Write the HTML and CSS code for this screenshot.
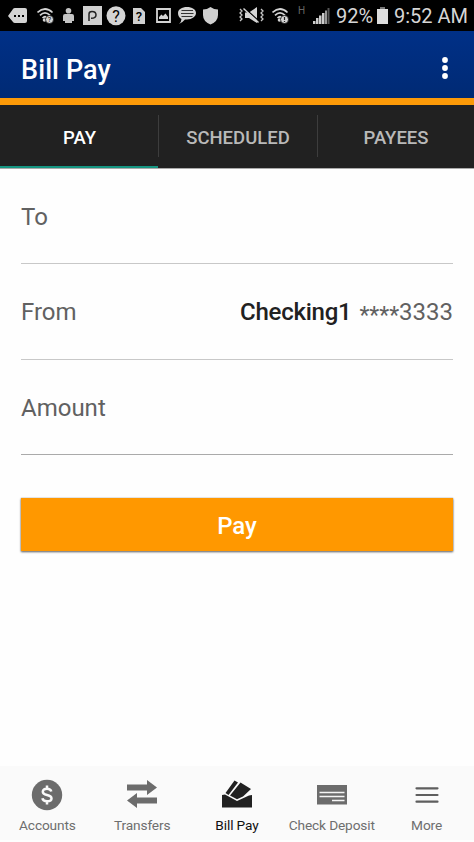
FILE: index.html
```html
<!DOCTYPE html>
<html lang="en">
<head>
<meta charset="utf-8">
<title>Bill Pay</title>
<link rel="stylesheet" href="styles.css">
</head>
<body>
<div class="status">
  <div class="notices">
    <svg width="19" height="16" viewBox="0 0 19 16"><path fill="#d4d4d4" d="M0 8 5 1Q5.500 0 7 0H17Q19 0 19 2V13Q19 15 17 15H7Q5.500 15 5 14Z"/><path d="M6 7h2v2H6zM10 7h2v2h-2zM14 7h2v2h-2z"/></svg>
    <svg class="wifi" width="17" height="16" viewBox="0 0 17 16"><g fill="none" stroke="#d4d4d4" stroke-width="1.700"><path d="M.5 4.500Q8-2.500 15.500 4.500M3 7.300Q8 2.500 13 7.300M5.500 10Q8 7.500 10.500 10"/></g><circle cx="7.500" cy="12" r="1.800" fill="#d4d4d4"/><circle cx="12.500" cy="11.500" r="4" fill="#d4d4d4" stroke="#000" stroke-width=".7"/><text x="12.500" y="14" font-size="7" text-anchor="middle">?</text></svg>
    <svg class="person" width="11" height="16" viewBox="0 0 11 16" fill="#c4c4c4"><circle cx="5.500" cy="2.800" r="2.800"/><path d="M2 6H9Q11 6 11 8V13H9V15H2V13H0V8Q0 6 2 6Z"/></svg>
    <svg class="pbox" width="20" height="20" viewBox="0 0 20 20"><path fill="#d0d0d0" d="M0 0H19V19H0z"/><path d="M6 15V8Q6 5.500 9 5.500Q13 5.500 13 9Q13 12.300 8 12.300" fill="none" stroke="#222" stroke-width="1.500"/></svg>
    <svg class="help" width="20" height="20" viewBox="0 0 20 20"><circle cx="10" cy="9.700" r="9.500" fill="#d4d4d4"/><text x="10" y="15.500" font-size="16" text-anchor="middle">?</text></svg>
    <svg class="doc" width="13" height="16" viewBox="0 0 13 16"><path fill="#d0d0d0" d="M0 0H8L12 4V16H0z"/><text x="6" y="13" font-size="13" font-weight="500" text-anchor="middle">?</text></svg>
    <svg class="image" width="15" height="15" viewBox="0 0 15 15"><path fill="none" stroke="#d4d4d4" stroke-width="1.800" d="M1 1H14V14H1z"/><path fill="#d4d4d4" d="M3 11V9L5.500 6.500 7 8 9.500 5.500 12 9V11z"/></svg>
    <svg class="chat" width="18" height="18" viewBox="0 0 18 18"><path fill="#d4d4d4" d="M9 0C14 0 18 2.500 18 6S14 12.500 9 12.500H7Q4 16 1 17Q3.500 14.500 3.500 12Q0 10 0 6C0 2.500 4 0 9 0Z"/><path stroke="#333" stroke-width="1" d="M3.500 3.500H15M3 6.500H15.500M3.500 9.500H14.500"/></svg>
    <svg class="shield" width="16" height="18" viewBox="0 0 16 18"><path fill="#d0d0d0" d="M7.500 0Q11 2.500 15 2.500V8Q15 14.500 7.500 17.500Q0 14.500 0 8V2.500Q4 2.500 7.500 0Z"/></svg>
  </div>
  <svg class="mute" width="25" height="17" viewBox="0 0 25 17"><path fill="#d4d4d4" d="M6 5.500H10L18 0V16L10 11H6z"/><path d="M6 1.500 21 15" stroke="#000" stroke-width="1.300"/><path d="M4.500 1.500 19.500 15.500" stroke="#d4d4d4" stroke-width="1.500"/><path d="M1 2 3 4 1 6 3 8 1 10 3 12 1 14M22 2 24 4 22 6 24 8 22 10 24 12 22 14" fill="none" stroke="#c4c4c4" stroke-width="1.300"/></svg>
  <svg class="wifi2" width="17" height="16" viewBox="0 0 17 16"><g fill="none" stroke="#d4d4d4" stroke-width="1.700"><path d="M.5 4.500Q8-2.500 15.500 4.500M3 7.300Q8 2.500 13 7.300M5.500 10Q8 7.500 10.500 10"/></g><circle cx="7.500" cy="12" r="1.800" fill="#d4d4d4"/><circle cx="12.500" cy="11.500" r="4" fill="#d4d4d4" stroke="#000" stroke-width=".7"/><path d="M12.500 9V12M12.500 13V14" stroke="#222" stroke-width="1.200"/></svg>
  <span class="net">H</span>
  <svg class="signal" width="17" height="16" viewBox="0 0 17 16"><path fill="#ccc" d="M0 13H2.500V16H0zM3 10H5.500V16H3zM6 7.500H8.500V16H6zM9 5H11.500V16H9z"/><path fill="#999" d="M12 2.500H14V16H12z"/><path fill="#555" d="M14.500 0H16.500V16H14.500z"/></svg>
  <span class="percent">92%</span>
  <svg class="battery" width="11" height="17" viewBox="0 0 11 17"><path fill="#777" d="M3 0H8V2H3z"/><path fill="#dedede" d="M0 2H11V17H0z"/></svg>
  <span class="time">9:52 AM</span>
</div>
<header class="appbar">
  <h1>Bill Pay</h1>
  <svg width="8" height="24" viewBox="0 0 8 24" fill="#fff"><circle cx="4" cy="4" r="2.900"/><circle cx="4" cy="12" r="2.900"/><circle cx="4" cy="20" r="2.900"/></svg>
</header>
<nav class="tabs">
  <a class="tab active"><span>PAY</span></a>
  <a class="tab"><span>SCHEDULED</span></a>
  <a class="tab"><span>PAYEES</span></a>
</nav>
<main>
  <div class="row"><span>To</span></div>
  <div class="row"><span>From</span><span class="account"><b>Checking1</b><span><span class="mask">****</span>3333</span></span></div>
  <div class="row last"><span>Amount</span></div>
  <button class="pay">Pay</button>
</main>
<footer class="bottom">
  <a class="item"><svg width="32" height="32" viewBox="0 0 32 32"><circle cx="16" cy="16" r="15.200" fill="#6c6c6c"/><path d="M20.300 12.500Q19.500 9.700 16 9.700Q11.800 9.700 11.800 12.700Q11.800 15 16 16Q20.500 17 20.500 19.500Q20.500 22.300 16 22.300Q12 22.300 11.400 19.300M16 6.500V10M16 22V25.500" fill="none" stroke="#fafafa" stroke-width="2.500"/></svg><span>Accounts</span></a>
  <a class="item"><svg width="32" height="32" viewBox="0 0 32 32" fill="#6c6c6c"><path d="M1 5.500H21V1L31 8.500 21 16V11.500H1zM31 18.500H11V14L1 21.500 11 29V24.500H31z"/></svg><span>Transfers</span></a>
  <a class="item on"><svg width="32" height="32" viewBox="0 0 32 32" fill="#212121"><path d="M1 16 4 15.500 16 22 28 16.500 31 16V28.500H1zM4.500 14 13.500 1.500 17 3.500 7.500 16zM9 16.500 19.500 3.500 30 10 22 17.500 16 20.200z"/></svg><span>Bill Pay</span></a>
  <a class="item"><svg width="32" height="32" viewBox="0 0 32 32"><path fill="#6c6c6c" d="M1 6H31V25.500H1z"/><path stroke="#f5f5f5" stroke-width="1.300" d="M3.500 13.500H28.500M3.500 17.500H28.500M16 21.500H28.500"/></svg><span>Check Deposit</span></a>
  <a class="item"><svg width="32" height="32" viewBox="0 0 32 32"><path stroke="#5e5e5e" stroke-width="2.200" stroke-linecap="round" d="M5.500 9.300H26.500M5.500 16H26.500M5.500 22.700H26.500"/></svg><span>More</span></a>
</footer>
</body>
</html>
```
FILE: styles.css
```css
* { box-sizing: border-box; }
body { margin: 0; width: 474px; height: 842px; background: #fefefe; font-family: Roboto, sans-serif; display: flex; flex-direction: column; overflow: hidden; }
svg { display: block; flex: none; }
.status { height: 31px; flex: none; background: #000; color: #d6d6d6; display: flex; align-items: center; padding-left: 8px; white-space: nowrap; }
.notices { display: flex; align-items: center; width: 231px; flex: none; }
.wifi { margin-left: 10px; }
.person { margin-left: 9px; }
.pbox { margin-left: 9px; }
.help { margin-left: 3px; }
.doc { margin-left: 7px; }
.image { margin-left: 10px; }
.chat { margin-left: 7px; }
.shield { margin-left: 7px; }
.wifi2 { margin-left: 8px; }
.net { width: 7px; margin-left: 9px; font-size: 10px; line-height: 10px; color: #666; margin-bottom: 9px; }
.signal { margin-left: 8px; }
.percent { width: 39px; margin-left: 6px; font-size: 20px; line-height: 31px; padding-top: 1px; }
.battery { margin-left: 2px; }
.time { margin-left: 6px; font-size: 20px; line-height: 31px; padding-top: 1px; }
.appbar { height: 74px; flex: none; background: linear-gradient(#003087, #002a74); border-bottom: 7px solid #fc9a08; display: flex; align-items: center; justify-content: space-between; padding: 7px 25px 0 21px; }
h1 { margin: 0; padding-top: 3px; font-size: 27px; font-weight: 500; line-height: 32px; color: #fff; letter-spacing: .1px; }
.tabs { height: 64px; flex: none; background: #212121; display: grid; grid-template-columns: 158px 159px 157px; border-bottom: 1px solid #aaa; }
.tab { display: flex; align-items: center; justify-content: center; font-size: 18.500px; font-weight: 500; color: #b9b9b9; background: linear-gradient(#3d3d3d, #3d3d3d) no-repeat 0 10px / 1px 42px; padding: 2px 0 0 1px; }
.active { color: #fff; background: none; border-bottom: 2px solid #159682; padding-top: 4px; }
main { flex: 1; padding: 0 21px; }
.row { height: 95.500px; padding-top: 2px; border-bottom: 1px solid #c8c8c8; display: flex; align-items: center; justify-content: space-between; color: #616161; font-size: 24px; line-height: 28px; }
.row:first-child { height: 95px; padding-top: 1px; }
.last { border-bottom-color: #aaa; }
.account { display: flex; gap: 8px; }
.account b { font-weight: 500; color: #212121; letter-spacing: -.25px; }
.mask { position: relative; top: 3px; font-size: 23px; }
.pay { display: block; width: 432px; height: 53px; margin: 43px 0 0; padding: 2px 0 0; border: 0; background: #ff9800; color: #fff; font: 500 24px/28px Roboto, sans-serif; box-shadow: 0 0 1px #999, 0 1px 2px #555; }
.bottom { height: 74px; flex: none; background: #fafafa; display: grid; grid-template-columns: repeat(5, 94.800px); margin-bottom: 2px; padding-top: 13px; }
.item { display: flex; flex-direction: column; align-items: center; gap: 6px; font-size: 13.700px; letter-spacing: -.13px; line-height: 16px; color: #6e6e6e; white-space: nowrap; }
.on { color: #111; }
```
